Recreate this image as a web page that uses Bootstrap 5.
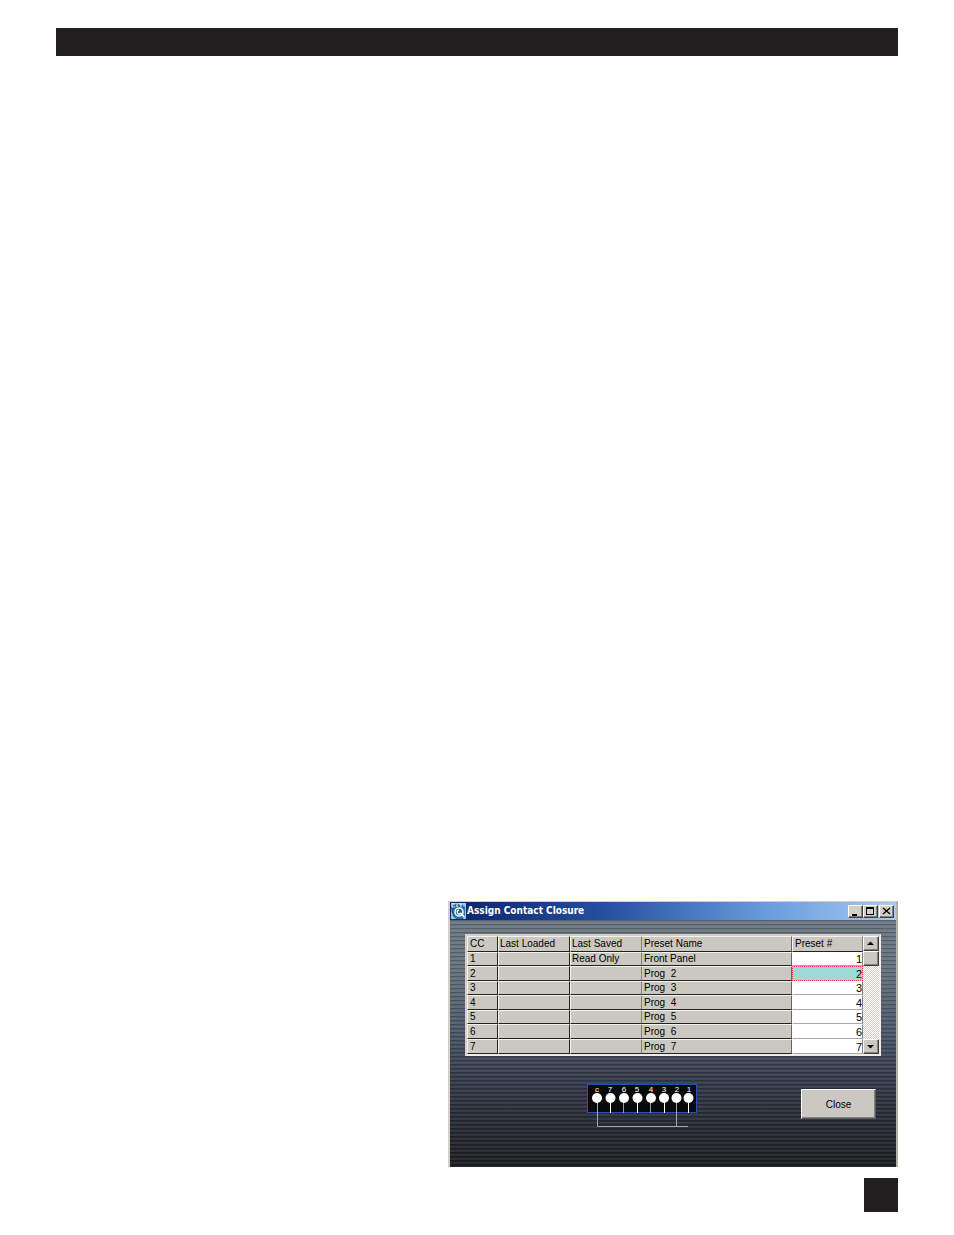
<!DOCTYPE html>
<html lang="en">
<head>
<meta charset="utf-8">
<meta name="viewport" content="width=device-width, initial-scale=1">
<title>Assign Contact Closure</title>
<link href="https://cdn.jsdelivr.net/npm/bootstrap@5.3.0/dist/css/bootstrap.min.css" rel="stylesheet">
<style>
  :root { --face: #cac8c0; --ink: #231f20; }
  body { background: #fff; font-family: "Liberation Sans", Arial, sans-serif; font-size: 10px; color: #000; }
  .sheet { padding: 28px 56px 23px; }
  .sheet-head { height: 28px; background: var(--ink); }
  .page-tab { width: 34px; height: 34px; background: var(--ink); margin-top: 11px; }

  .dialog-win { width: 100%; max-width: 450px; border: solid #d4d0c8; border-width: 1px 2px 0; border-right-color: #b3b0aa; }
  .title-bar { height: 18px; padding: 0 2px 0 1px; background: linear-gradient(90deg, #0a246a, #2450a0 35%, #6a9ede 72%, #a6caf0); }
  .title-bar h1 { font: bold 10px/18px "DejaVu Sans Condensed", "DejaVu Sans", sans-serif; color: #fff; margin-left: 1px; }
  .win-btn { width: 15px; height: 13px; padding: 0; background: #d4d0c8; border: 1px solid; border-color: #fff #404040 #404040 #fff; box-shadow: inset -1px -1px #808080; }
  .win-btn + .win-btn:last-child { margin-left: 1px; }
  .win-btn svg, .scroll-btn svg, .app-icon { display: block; }
  .win-body {
    padding: 14px 15px 39px;
    background:
      repeating-linear-gradient(180deg, rgba(0,0,0,.18) 0 1px, transparent 1px 2px, rgba(255,255,255,.06) 2px 4px),
      linear-gradient(180deg, #6c7682 0, #66707c 20%, #4c5666 46%, #363e4d 62%, #292d37 80%, #1d1e21 100%);
  }

  .grid-frame { border: 2px solid; border-color: #d4d0c8 #efede6 #efede6 #d4d0c8; box-shadow: inset 1px 1px #404040; background: #808080; }
  .cc-grid { table-layout: fixed; border-collapse: separate; border-spacing: 0; width: 100%; }
  .cc-grid th, .cc-grid td { height: 14px; padding: 0 2px; line-height: 12px; font-weight: 400; white-space: nowrap; background: var(--face); border: solid; border-width: 1px; border-color: #f4f3ee #222 #222 #f4f3ee; }
  .cc-grid th { height: 16px; }
  .cc-grid tbody tr:nth-child(even) > *, .cc-grid tbody tr:last-child > * { height: 15px; }
  .cc-grid tr > :nth-child(2), .cc-grid tr > :nth-child(3) { padding-left: 1px; }
  .cc-grid tr > :nth-child(4) { border-left-color: #808080; }
  .cc-grid tr > :nth-child(3) { border-right-width: 0; }
  .cc-grid tr > :nth-child(4) { border-right-color: #666; }
  .cc-grid td:last-child { background: #fff; border-color: #fff #808080 #a5aaab #fff; text-align: right; padding-right: 0; font-size: 11px; }
  .cc-grid th:last-child { border-right-color: #808080; }
  .cc-grid td.picked:last-child { background: #9bdbd3; border: 1px dotted #f0402c; }
  .scroll-rail { width: 16px; background: repeating-conic-gradient(#fff 0 25%, #d4d0c8 0 50%) 0 0 / 2px 2px; }
  .scroll-btn, .scroll-thumb { width: 16px; height: 15px; padding: 0; background: #cac8c0; border: 1px solid; border-color: #fff #404040 #404040 #fff; box-shadow: inset -1px -1px #808080; }

  .win-foot { margin-top: 28px; padding: 0 5px 0 122px; }
  .close-btn { width: 75px; height: 30px; margin-top: 5px; border-radius: 0; background: var(--face); border: 1px solid; border-color: #fff #555b5b #555b5b #fff; box-shadow: inset -1px -1px #808580; padding: 0; font-size: 10px; color: #000; }
</style>
</head>
<body>
<div class="sheet min-vh-100 d-flex flex-column">
  <header class="sheet-head"></header>
  <main class="mt-auto d-flex justify-content-end">
    <section class="dialog-win" aria-labelledby="win-title">
      <div class="title-bar d-flex align-items-center">
        <svg class="app-icon" width="15" height="16" viewBox="0 0 15 16" aria-hidden="true">
          <rect width="15" height="16" fill="#2c6fa8"/>
          <path d="M0 0h15v16h-3l2-4V4l-4-3H0zM0 7l2 6 3 3H0z" fill="#9fc9e2"/>
          <path d="M1 4V1h3M6 1v3M8 1h2v3M1 4h3" stroke="#fff" fill="none"/>
          <circle cx="8" cy="9" r="4" fill="#1f5f9c" stroke="#e8f5fb" stroke-width="1.600"/>
          <path d="M8 7a2 2 0 1 0 2 3M10 10l3 4" stroke="#fff" stroke-width="1.500" fill="none"/>
          <path d="M3 4q-3 5 1 10" stroke="#1b4f8d" fill="none"/>
        </svg>
        <h1 id="win-title" class="mb-0 flex-grow-1">Assign Contact Closure</h1>
        <button class="win-btn" type="button" aria-label="Minimize"><svg width="13" height="11" viewBox="0 0 13 11"><path d="M3 8h5v2H3z"/></svg></button>
        <button class="win-btn" type="button" aria-label="Maximize"><svg width="13" height="11" viewBox="0 0 13 11"><path d="M2 1h8v8H2zM3 3v5h6V3z" fill-rule="evenodd"/></svg></button>
        <button class="win-btn" type="button" aria-label="Close window"><svg width="13" height="11" viewBox="0 0 13 11"><path d="M3 2l7 6M10 2L3 8" stroke="#000" stroke-width="1.500"/></svg></button>
      </div>
      <div class="win-body">
        <div class="grid-frame d-flex">
          <table class="cc-grid">
            <colgroup><col style="width:31px"><col style="width:72px"><col style="width:71px"><col><col style="width:71px"></colgroup>
            <thead><tr><th>CC</th><th>Last Loaded</th><th>Last Saved</th><th>Preset Name</th><th>Preset #</th></tr></thead>
            <tbody>
              <tr><td>1</td><td></td><td>Read Only</td><td>Front Panel</td><td>1</td></tr>
              <tr><td>2</td><td></td><td></td><td>Prog&nbsp; 2</td><td class="picked">2</td></tr>
              <tr><td>3</td><td></td><td></td><td>Prog&nbsp; 3</td><td>3</td></tr>
              <tr><td>4</td><td></td><td></td><td>Prog&nbsp; 4</td><td>4</td></tr>
              <tr><td>5</td><td></td><td></td><td>Prog&nbsp; 5</td><td>5</td></tr>
              <tr><td>6</td><td></td><td></td><td>Prog&nbsp; 6</td><td>6</td></tr>
              <tr><td>7</td><td></td><td></td><td>Prog&nbsp; 7</td><td>7</td></tr>
            </tbody>
          </table>
          <div class="scroll-rail d-flex flex-column flex-shrink-0">
            <button class="scroll-btn" type="button" aria-label="Scroll up"><svg width="14" height="13" viewBox="0 0 14 13"><path d="M3 8h7L6.500 4.500z"/></svg></button>
            <div class="scroll-thumb"></div>
            <button class="scroll-btn mt-auto" type="button" aria-label="Scroll down"><svg width="14" height="13" viewBox="0 0 14 13"><path d="M3 5h7L6.500 8.500z"/></svg></button>
          </div>
        </div>
        <div class="win-foot d-flex justify-content-between align-items-start">
          <svg width="111" height="44" viewBox="0 0 111 44" role="img" aria-label="Contact closure connector">
            <rect x=".5" y=".5" width="109" height="28" fill="#08090a" stroke="#2450b8"/>
            <path d="M23.500 14v15M50.500 14v15M77.500 14v15M101.500 14v15" stroke="#fff"/>
            <path d="M36.500 14v15M63.500 14v15" stroke="#9a9a9a"/>
            <path d="M10.500 14v28.500H101M89.500 14v28" stroke="#a5a6a8" fill="none"/>
            <g fill="#fff"><circle cx="10" cy="14" r="5"/><circle cx="23.500" cy="14" r="5"/><circle cx="37" cy="14" r="5"/><circle cx="50.500" cy="14" r="5"/><circle cx="64" cy="14" r="5"/><circle cx="77" cy="14" r="5"/><circle cx="89.500" cy="14" r="5"/><circle cx="101.500" cy="14" r="5"/></g>
            <g fill="#fff" font-family="Liberation Sans, sans-serif" font-size="8" text-anchor="middle"><text x="10" y="8">c</text><text x="23" y="8">7</text><text x="37" y="8">6</text><text x="50" y="8">5</text><text x="64" y="8">4</text><text x="77" y="8">3</text><text x="90" y="8">2</text><text x="102" y="8">1</text></g>
          </svg>
          <button class="btn close-btn" type="button">Close</button>
        </div>
      </div>
    </section>
  </main>
  <footer class="d-flex justify-content-end"><div class="page-tab"></div></footer>
</div>
<script src="https://cdn.jsdelivr.net/npm/bootstrap@5.3.0/dist/js/bootstrap.bundle.min.js"></script>
</body>
</html>
